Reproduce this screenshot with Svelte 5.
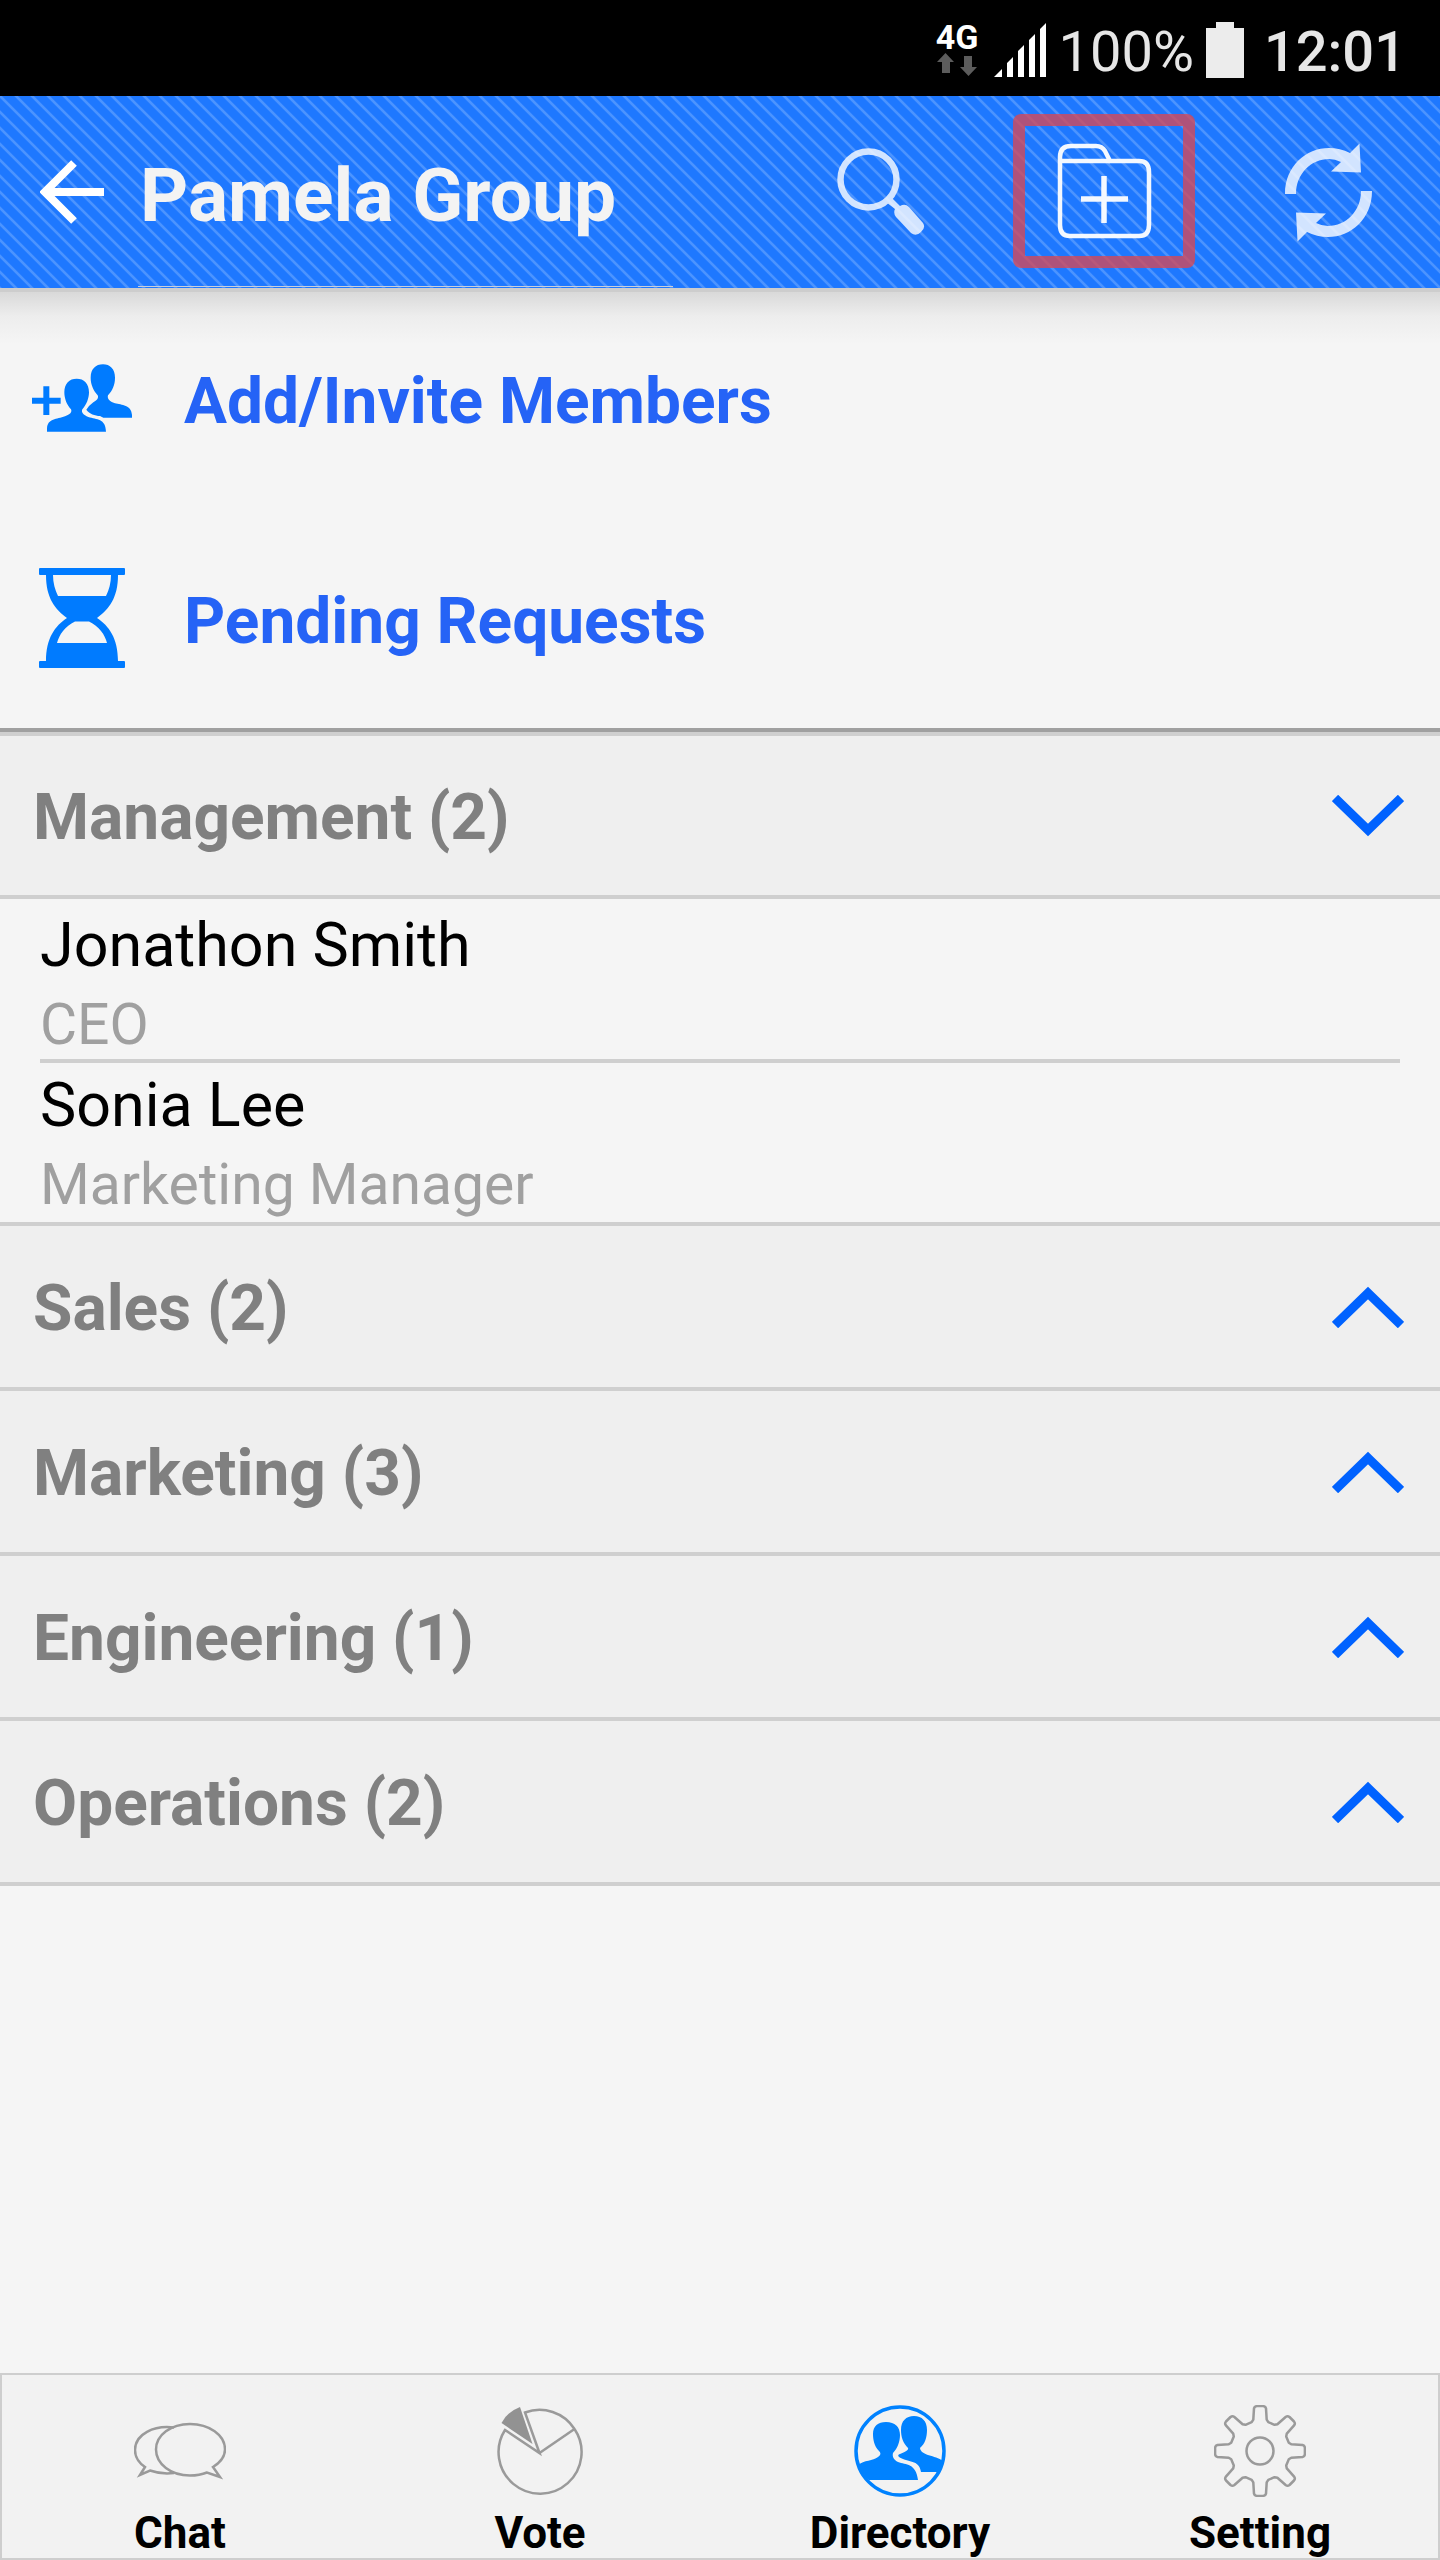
<script>
  let groups = $state([
    {
      name: 'Management',
      open: true,
      count: 2,
      members: [
        { name: 'Jonathon Smith', role: 'CEO' },
        { name: 'Sonia Lee', role: 'Marketing Manager' }
      ]
    },
    { name: 'Sales', open: false, count: 2, members: [] },
    { name: 'Marketing', open: false, count: 3, members: [] },
    { name: 'Engineering', open: false, count: 1, members: [] },
    { name: 'Operations', open: false, count: 2, members: [] }
  ]);

  const tabs = ['Chat', 'Vote', 'Directory', 'Setting'];

  // Outline of an eight-toothed gear centred on 0,0
  function gearPath() {
    const point = (r, deg) => {
      const a = ((deg - 90) * Math.PI) / 180;
      return `${(r * Math.cos(a)).toFixed(1)} ${(r * Math.sin(a)).toFixed(1)}`;
    };
    let d = '';
    for (let i = 0; i < 8; i++) {
      const t = i * 45;
      d += `${i ? 'L' : 'M'}${point(30, t - 16)}L${point(32, t - 12)}L${point(43, t - 8)}`;
      d += `Q${point(45, t - 7)} ${point(45, t - 4)}L${point(45, t + 4)}Q${point(45, t + 7)} ${point(43, t + 8)}`;
      d += `L${point(32, t + 12)}L${point(30, t + 16)}`;
    }
    return d + 'Z';
  }
</script>

<div class="app">
  <div class="status">
    <div class="network">
      <span>4G</span>
      <svg width="42" height="24" viewBox="0 0 42 24" aria-hidden="true">
        <path d="M9.500 0L18 9H14V20H6V9H1ZM28 3H36V14H41L32.500 23L24 14H28Z" fill="#5c5c5c" />
      </svg>
    </div>
    <svg class="signal" width="52" height="54" viewBox="0 0 52 54" aria-hidden="true">
      <path d="M0 54L8 46V54ZM13 54V40L19 34V54ZM24 54V28L30 22V54ZM35 54V17L41 11V54ZM46 54V6L52 0V54Z" fill="#fff" />
    </svg>
    <span class="percent">100%</span>
    <svg class="battery" width="38" height="56" viewBox="0 0 38 56" aria-hidden="true">
      <path d="M10 0H28V6H38V56H0V6H10Z" fill="#ececec" />
    </svg>
    <time>12:01</time>
  </div>

  <header>
    <button class="back" aria-label="Back">
      <svg width="64" height="64" viewBox="40 160 64 64">
        <path d="M104 192H46M74 163L45 192L74 221" fill="none" stroke="#fff" stroke-width="8" />
      </svg>
    </button>
    <h1>Pamela Group</h1>
    <button class="tool" aria-label="Search">
      <svg width="90" height="96" viewBox="834 144 90 96">
        <g opacity="0.8">
          <circle cx="867.500" cy="179.500" r="28" fill="none" stroke="#fff" stroke-width="6.500" />
          <path d="M885 202L890 197L899 206Q904 203 908 207L922 223Q925 228 920 232Q915 237 910 233L895 217Q892 213 894 209Z" fill="#fff" />
        </g>
      </svg>
    </button>
    <button class="tool" aria-label="New folder">
      <span class="highlight">
        <svg width="96" height="98" viewBox="1056 144 96 98">
          <g fill="none" stroke="#fff" stroke-width="4.500" opacity="0.95">
            <path d="M1060 227V159Q1060 148 1071 148H1096Q1102 148 1105 153L1110 163H1139Q1149 163 1149 174V227Q1149 238 1139 238H1070Q1060 238 1060 227Z" />
            <path d="M1060 163H1110" />
            <path d="M1104 178V225M1081 201H1128" stroke-width="5.500" />
          </g>
        </svg>
      </span>
    </button>
    <button class="tool" aria-label="Refresh">
      <svg width="88" height="102" viewBox="1284 143 88 102">
        <defs>
          <path id="sweep" d="M1285 196C1285 168 1306 150 1329 150Q1340 150 1350 155L1359.500 145.500L1361 174.500L1331 173.500L1341 164Q1335 161 1329 161C1311 161 1296 176 1296 196Z" />
        </defs>
        <g fill="#fff" opacity="0.8">
          <use href="#sweep" />
          <use href="#sweep" transform="rotate(180 1328.500 194.500)" />
        </g>
      </svg>
    </button>
  </header>

  <main>
    <div class="actions">
      <button class="action">
        <svg width="100" height="68" viewBox="36 42 300 204" fill="#007bff">
          <path d="M36 143H70V109H88V143H122V161H88V195H70V161H36Z" />
          <path d="M81 245V235C83 205 110 209 135 199C150 193 157 187 153 178C140 165 133 145 133 127C133 100 148 86 170 86C192 86 207 100 207 127C207 145 199 165 187 178C183 187 190 195 205 201C230 209 257 205 258 245Z" />
          <path d="M336 203V195C334 165 305 165 285 160C268 155 261 145 264 136C277 122 285 105 285 83C285 57 270 43 249 43C227 43 212 57 212 83C212 105 221 122 233 136C237 145 230 152 220 157L207 168L199 179C208 192 225 197 240 198L250 203Z" />
        </svg>
        <span>Add/Invite Members</span>
      </button>
      <button class="action">
        <svg width="100" height="100" viewBox="32 568 100 100" fill="#007bff">
          <rect x="39" y="568" width="86" height="7" rx="1" />
          <rect x="39" y="661" width="86" height="7" rx="1" />
          <path fill-rule="evenodd" d="M46 575C46 598 55 609 67 618C55 626 46 638 46 661H118C118 638 109 626 97 618C109 609 118 598 118 575ZM53 575H111C111 583 109 590 106 596H58C55 590 53 583 53 575ZM75 621.500H89C99 626 105 635 107 643H57C59 635 65 626 75 621.500Z" />
        </svg>
        <span>Pending Requests</span>
      </button>
    </div>

    {#each groups as group}
      <section>
        <h2>
          <button class="group" aria-expanded={group.open} onclick={() => (group.open = !group.open)}>
            <span>{group.name} ({group.count})</span>
            <svg width="72" height="42" viewBox="0 0 72 42" aria-hidden="true">
              <path d={group.open ? 'M3 3L36 35L69 3' : 'M3 39L36 7L69 39'} fill="none" stroke="#0062ff" stroke-width="9" />
            </svg>
          </button>
        </h2>
        {#if group.open && group.members.length}
          <ul>
            {#each group.members as member}
              <li>
                <span class="name">{member.name}</span>
                <span class="role">{member.role}</span>
              </li>
            {/each}
          </ul>
        {/if}
      </section>
    {/each}
  </main>

  <nav>
    {#each tabs as tab}
      <a href="#{tab.toLowerCase()}" aria-current={tab === 'Directory' ? 'page' : undefined}>
        {#if tab === 'Chat'}
          <svg width="92" height="92" viewBox="134 2405 92 92" fill="none" stroke="#9a9a9a" stroke-width="2.500">
            <path d="M174 2427.500C154 2425 135 2434 135 2450C135 2457 139 2463 145 2467L140 2475L150 2470.500C157 2473 166 2474 174 2473" />
            <path d="M213 2467L220 2477L207 2472.500C202 2474.500 196 2475.500 190 2475.500C171 2475.500 156 2464 156 2449.500S171 2424 190 2424S225 2435 225 2449.500C225 2456 221 2462 213 2467Z" />
          </svg>
        {:else if tab === 'Vote'}
          <svg width="92" height="92" viewBox="494 2405 92 92" fill="none" stroke="#9a9a9a" stroke-width="2.500">
            <path d="M539.500 2453L525 2412.500A41.500 41.500 0 0 1 574.500 2429A41.500 41.500 0 1 1 505 2430Z" />
            <path d="M539.500 2453L574.500 2429" />
            <path d="M520 2407L532.500 2444L501.500 2423Q507 2412 520 2407Z" fill="#929292" stroke="none" />
          </svg>
        {:else if tab === 'Directory'}
          <svg width="92" height="92" viewBox="854 2405 92 92" fill="#0082ff">
            <circle cx="900" cy="2451" r="44" fill="none" stroke="#0082ff" stroke-width="3.500" />
            <path d="M869 2480C864 2475 860 2470 858 2465C864 2460 873 2461 878 2457C881 2455 881 2453 879 2451C874 2446 873 2439 873 2434C873 2426 878 2422 886 2422C895 2422 900 2427 900 2435C900 2442 897 2449 893 2453C892 2457 894 2460 898 2462C906 2465 916 2463 918 2480Z" />
            <path d="M921 2472C919 2459 908 2463 899 2457Q897 2455 900 2454C905 2452 909 2450 908 2448C903 2443 901 2437 901 2430C901 2421 906 2416 914 2416C922 2416 927 2421 927 2430C927 2437 925 2444 920 2448C921 2456 935 2455 943 2461C942 2465 940 2469 937 2472Z" />
          </svg>
        {:else}
          <svg width="92" height="92" viewBox="-46 -46 92 92" fill="none" stroke="#9a9a9a" stroke-width="2.500" stroke-linejoin="round">
            <path d={gearPath()} />
            <circle r="13.500" />
          </svg>
        {/if}
        <span>{tab}</span>
      </a>
    {/each}
  </nav>
</div>

<style>
  :global(body) {
    background: #f5f5f5;
  }

  .app {
    display: flex;
    flex-direction: column;
    min-height: 100vh;
    font-family: Roboto, 'Liberation Sans', sans-serif;
    color: #000;
  }

  button {
    border: 0;
    padding: 0;
    background: none;
    font: inherit;
    color: inherit;
    cursor: pointer;
  }

  svg {
    display: block;
    flex: none;
  }

  h1,
  h2,
  ul {
    margin: 0;
    padding: 0;
    font-size: inherit;
    list-style: none;
  }

  .status {
    display: flex;
    justify-content: flex-end;
    align-items: center;
    height: 96px;
    padding: 4px 34px 0 0;
    box-sizing: border-box;
    background: #000;
    color: #e6e6e6;
    font-size: 56px;
    line-height: 64px;
  }

  .percent,
  time {
    padding-top: 4px;
  }

  .network {
    display: flex;
    flex-direction: column;
    gap: 2px;
    color: #fff;
    font-size: 34px;
    font-weight: 700;
    line-height: 28px;
  }

  .signal {
    margin: 0 12px 0 16px;
  }

  .battery {
    margin: 0 20px 0 12px;
  }

  time {
    font-weight: 500;
  }

  header {
    display: flex;
    height: 192px;
    background:
      linear-gradient(
        45deg,
        #4c94ff 0 3%,
        #1e78ff 8% 42%,
        #4c94ff 47% 53%,
        #1e78ff 58% 92%,
        #4c94ff 97%
      ) 0 0 / 16px 16px;
  }

  .back {
    padding: 0 34px 0 40px;
  }

  h1 {
    flex: 1;
    height: 190px;
    margin: 0 95px 1px 0;
    padding-left: 2px;
    border-bottom: 1px solid #c8cfdb;
    color: #f3f3f3;
    font-size: 75px;
    font-weight: 700;
    line-height: 198px;
    white-space: nowrap;
  }

  .tool {
    display: flex;
    align-items: center;
    justify-content: center;
    width: 224px;
  }

  .highlight {
    display: flex;
    align-items: center;
    justify-content: center;
    width: 182px;
    height: 154px;
    margin-bottom: 2px;
    box-sizing: border-box;
    border: 12px solid rgba(216, 72, 84, 0.78);
    border-radius: 8px;
  }

  .actions {
    border-bottom: 4px solid #a0a0a0;
    box-shadow: 0 4px #cfcfcf;
    margin-bottom: 4px;
    background: linear-gradient(#cdcdcd 0 4px, #d9d9d9 4px, #ededed 28px, #f5f5f5 56px);
  }

  .action {
    display: flex;
    align-items: center;
    gap: 52px;
    width: 100%;
    height: 220px;
    padding: 0 32px;
    color: #2563f6;
    font-size: 64px;
    font-weight: 700;
    line-height: 76px;
    text-align: left;
  }

  .action span {
    padding-top: 8px;
  }

  .group {
    display: flex;
    align-items: center;
    justify-content: space-between;
    width: 100%;
    height: 165px;
    padding: 0 36px 0 33px;
    border-bottom: 4px solid #cfcfcf;
    background: #efefef;
    color: #808080;
    font-size: 64px;
    font-weight: 700;
    line-height: 76px;
  }

  .group[aria-expanded='true'] {
    height: 163px;
  }

  .group span {
    padding-top: 4px;
  }

  ul {
    padding: 4px 40px 3px;
    border-bottom: 4px solid #cfcfcf;
  }

  li {
    display: flex;
    flex-direction: column;
    gap: 4px;
  }

  li + li {
    border-top: 4px solid #cfcfcf;
  }

  .name {
    font-size: 61px;
    line-height: 84px;
  }

  .role {
    color: #a0a0a0;
    font-size: 57px;
    line-height: 68px;
  }

  nav {
    display: flex;
    margin-top: auto;
    padding: 32px 0 3px;
    box-shadow: inset 0 0 0 2px #cecece;
    background: #f2f2f2;
  }

  nav a {
    display: flex;
    flex: 1 1 0;
    flex-direction: column;
    align-items: center;
    gap: 12px;
    color: #000;
    font-size: 44px;
    font-weight: 700;
    line-height: 48px;
    text-decoration: none;
  }
</style>
